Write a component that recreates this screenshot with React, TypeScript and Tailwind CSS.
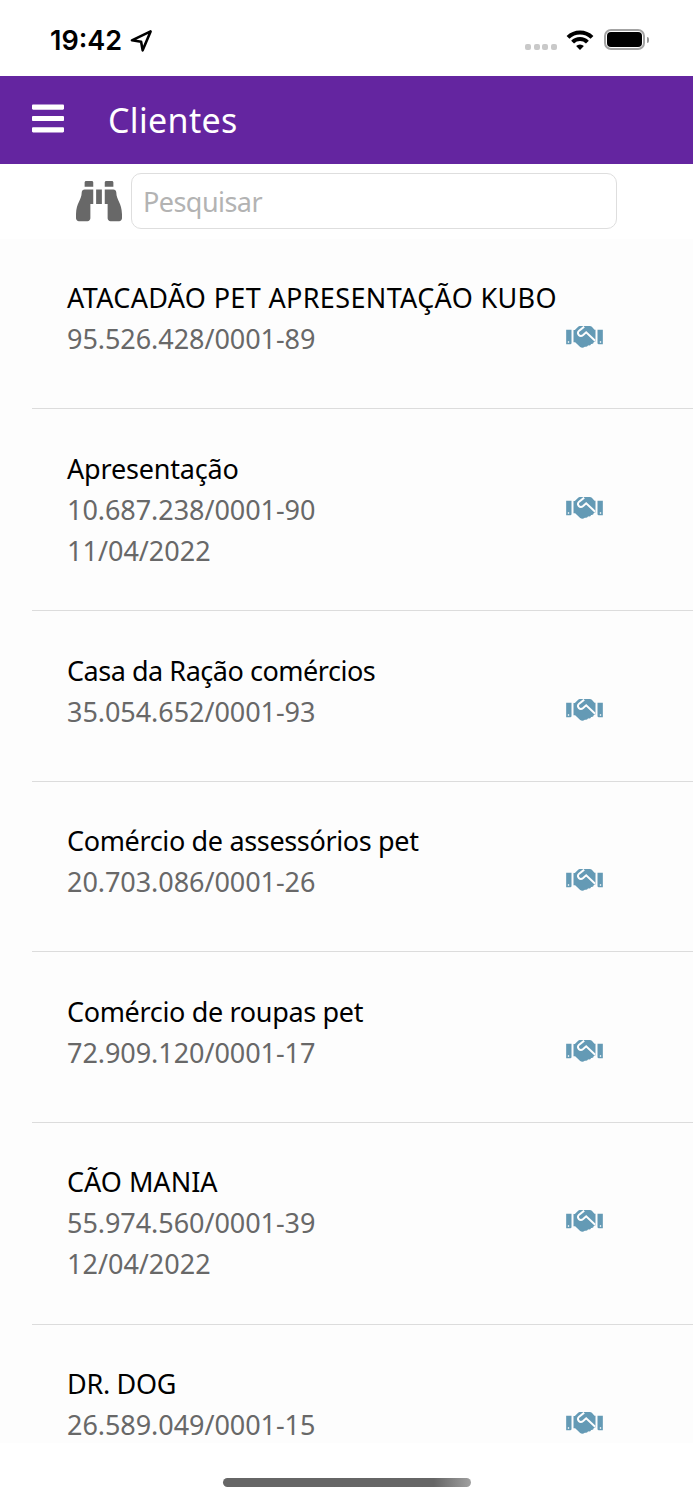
import React from 'react';
import { FaBars, FaBinoculars } from 'react-icons/fa';
import { clsx } from 'clsx';

interface Client {
  name: string;
  document: string;
  date?: string;
  tracking: string;
}

const clients: Client[] = [
  { name: 'ATACADÃO PET APRESENTAÇÃO KUBO', document: '95.526.428/0001-89', tracking: 'tracking-[0.35px]' },
  { name: 'Apresentação', document: '10.687.238/0001-90', date: '11/04/2022', tracking: 'tracking-[-0.18px]' },
  { name: 'Casa da Ração comércios', document: '35.054.652/0001-93', tracking: 'tracking-[-0.47px]' },
  { name: 'Comércio de assessórios pet', document: '20.703.086/0001-26', tracking: 'tracking-[-0.35px]' },
  { name: 'Comércio de roupas pet', document: '72.909.120/0001-17', tracking: 'tracking-[-0.34px]' },
  { name: 'CÃO MANIA', document: '55.974.560/0001-39', date: '12/04/2022', tracking: 'tracking-[0px]' },
  { name: 'DR. DOG', document: '26.589.049/0001-15', tracking: 'tracking-[-0.3px]' },
];

const HandshakeIcon = ({ className }: { className?: string }) => (
  <svg viewBox="0 0 110 66" className={className} fill="currentColor">
    <path fillRule="evenodd" d="M0 11h16v40a4 4 0 0 1-4 4H0zM5 46h4v4H5z" />
    <path fillRule="evenodd" d="M94 11h16v44H98a4 4 0 0 1-4-4zM101 46h4v4h-4z" />
    <path d="M22 12h4L36 2q2-2 5-2h30q4 0 6 2l8 9h3v35l-5 2q-1 7-8 6-3 6-9 4-4 6-10 4-7 6-14 1L27 49h-5z" />
    <path d="M54 2 39 14c-9 9 2 21 12 13l9-8 27 25" fill="none" stroke="#fdfdfd" strokeWidth="6" />
  </svg>
);

const StatusBar = () => (
  <div className="flex h-[76px] shrink-0 items-center justify-between pl-[50px] pr-[44px] pt-[3px] text-black">
    <div className="flex items-center gap-2 pt-[2px]">
      <span className="font-['Inter',sans-serif] text-[27px] font-semibold leading-none">19:42</span>
      <svg width="23" height="23" viewBox="0 0 24 24" fill="none" stroke="currentColor" strokeWidth="2.7" strokeLinejoin="round">
        <path d="M21.5 2.5 2 11.8l9.6 1.6 1.6 8.9z" />
      </svg>
    </div>
    <div className="flex items-center">
      <div className="mr-[9px] mt-[14px] flex gap-[2.7px]">
        {[0, 1, 2, 3].map((dot) => (
          <span key={dot} className="h-[6px] w-[6px] rounded-[2px] bg-[#c9c9c9]" />
        ))}
      </div>
      <svg width="28" height="22" viewBox="0 0 28 22" fill="none" stroke="currentColor" strokeWidth="4">
        <path d="M2 8.4a17 17 0 0 1 24 0" />
        <path d="M6.6 13.2a10.4 10.4 0 0 1 14.8 0" />
        <path d="M14 21l-3.9-4a5.6 5.6 0 0 1 7.8 0z" fill="currentColor" stroke="none" />
      </svg>
      <div className="ml-[10px] h-[21px] w-[41px] rounded-[7px] border-2 border-[#a3a3a3] p-px">
        <div className="h-full rounded-[4px] bg-black" />
      </div>
      <div className="ml-[2px] h-[6px] w-[2px] rounded-r-full bg-[#969696]" />
    </div>
  </div>
);

const ClientRow = ({ client }: { client: Client }) => (
  <li
    className={clsx(
      'ml-8 flex shrink-0 justify-between border-b border-[#dcdcdc] pl-[35px] pr-[90px] pt-[38.6px]',
      client.date ? 'h-[202px]' : 'h-[170.5px]'
    )}
  >
    <div className="whitespace-nowrap text-[27px] leading-[41px]">
      <h2 className={clsx('text-black', client.tracking)}>{client.name}</h2>
      <p className="text-[#686868] tracking-[-0.06px]">{client.document}</p>
      {client.date && <p className="text-[#686868]">{client.date}</p>}
    </div>
    <HandshakeIcon className="mt-[49px] h-[22px] w-[37px] shrink-0 text-[#649ab5]" />
  </li>
);

export default function App() {
  return (
    <div className="flex h-[1500px] w-[693px] flex-col overflow-hidden bg-white font-['Noto_Sans',sans-serif]">
      <StatusBar />
      <header className="flex h-[88px] shrink-0 items-center bg-[#6425a0] pl-8 text-white">
        <FaBars className="mb-[3px] h-[37px] w-8" />
        <h1 className="ml-11 text-[34px] leading-none tracking-[0.35px]">Clientes</h1>
      </header>
      <div className="flex h-[74.5px] shrink-0 items-center px-[76px] pb-[0.5px]">
        <FaBinoculars className="h-[46px] w-[46px] shrink-0 text-[#686868]" />
        <input
          type="text"
          placeholder="Pesquisar"
          className="ml-[9px] h-[56px] min-w-0 flex-1 rounded-[10px] border border-[#dedede] bg-white px-[11px] text-[27px] tracking-[-0.55px] outline-none placeholder:text-[#b3b3b3]"
        />
      </div>
      <ul className="flex h-[1204.5px] shrink-0 flex-col overflow-hidden bg-[#fdfdfd]">
        {clients.map((client) => (
          <ClientRow key={client.document} client={client} />
        ))}
      </ul>
      <div className="flex flex-1 justify-center pt-[35px]">
        <div className="h-[9px] w-[248px] rounded-full bg-linear-to-r from-[#666] from-85% to-[#a0a0a0]" />
      </div>
    </div>
  );
}
